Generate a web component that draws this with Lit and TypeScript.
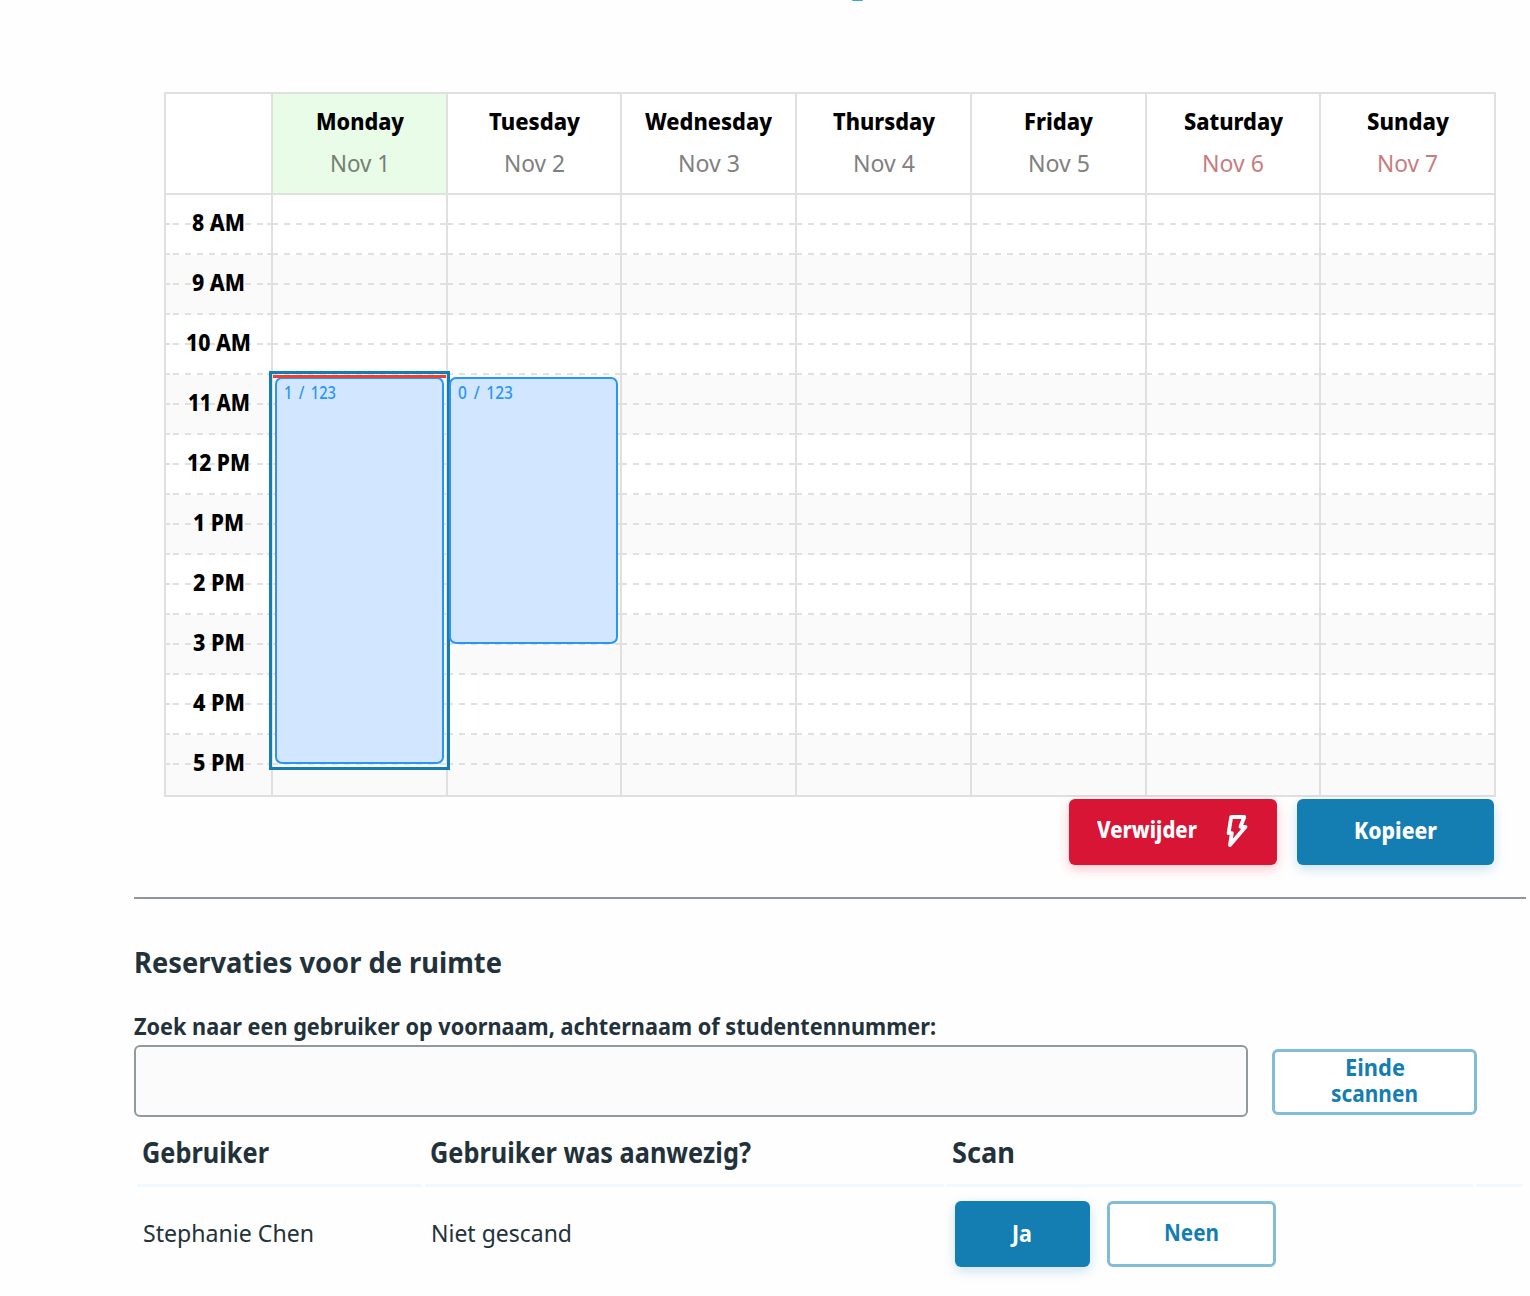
import { LitElement, html, css, nothing } from "lit";
import { customElement, property, query } from "lit/decorators.js";
import { styleMap } from "lit/directives/style-map.js";

/** A single line of text condensed or stretched to a given width. */
@customElement("fit-text")
export class FitText extends LitElement {
  @property({ type: Number }) w = 0;
  @property() text = "";
  @query(".ink") private ink!: HTMLElement;

  static styles = css`
    :host { display: inline-block; white-space: nowrap; vertical-align: top; }
    .box { display: block; }
    .ink { display: inline-block; transform-origin: 0 50%; }
  `;

  protected updated() {
    this.ink.style.transform = "none";
    const natural = this.ink.getBoundingClientRect().width;
    if (natural > 0) this.ink.style.transform = `scaleX(${this.w / natural})`;
  }

  render() {
    return html`<span class="box" style=${styleMap({ width: `${this.w}px` })}><span class="ink">${this.text}</span></span>`;
  }
}

interface Day {
  name: string;
  nameW: number;
  date: string;
  dateW: number;
  today?: boolean;
  weekend?: boolean;
}

const DAYS: Day[] = [
  { name: "Monday", nameW: 88, date: "Nov 1", dateW: 60, today: true },
  { name: "Tuesday", nameW: 91, date: "Nov 2", dateW: 61 },
  { name: "Wednesday", nameW: 127, date: "Nov 3", dateW: 62 },
  { name: "Thursday", nameW: 102, date: "Nov 4", dateW: 62 },
  { name: "Friday", nameW: 69, date: "Nov 5", dateW: 62 },
  { name: "Saturday", nameW: 99, date: "Nov 6", dateW: 62, weekend: true },
  { name: "Sunday", nameW: 82, date: "Nov 7", dateW: 61, weekend: true },
];

const HOURS: [string, number][] = [
  ["8 AM", 53], ["9 AM", 53], ["10 AM", 65], ["11 AM", 62], ["12 PM", 63],
  ["1 PM", 51], ["2 PM", 52], ["3 PM", 52], ["4 PM", 52], ["5 PM", 52],
];

@customElement("week-calendar")
export class WeekCalendar extends LitElement {
  static styles = css`
    :host { display: block; width: 1332px; }
    * { box-sizing: border-box; }
    .cal { border: 2px solid #e0e0e0; background: #fff; }
    .grid { display: grid; grid-template-columns: 107px 175px 174px 175px 175px 175px 174px 173px; }
    .head { height: 101px; border-bottom: 2px solid #e0e0e0; }
    .cell { border-right: 2px solid #e0e0e0; }
    .cell:last-child { border-right: 0; }
    .day { display: flex; flex-direction: column; align-items: center; padding-top: 7px; line-height: 40px; font-size: 23.5px; }
    .today { background: #e8fce8; }
    .name { font-weight: 800; color: #000; height: 42px; }
    .date { color: #808080; }
    .today .date { color: #748074; }
    .weekend .date { color: #c77d80; }
    .body { height: 600px; }
    .col { position: relative; }
    .slot { height: 60px; }
    .slot:nth-child(even) { background: #fafafa; }
    .half { height: 30px; margin: 0 -1px; background: repeating-linear-gradient(90deg, #e0e0e0 0 6px, transparent 6px 12px) 0 100% / 100% 2px no-repeat; }
    .hours .half {
      background:
        linear-gradient(#e0e0e0, #e0e0e0) 0 100% / 5px 2px no-repeat,
        linear-gradient(#e0e0e0, #e0e0e0) 100% 100% / 5px 2px no-repeat,
        linear-gradient(90deg, #e0e0e0 6px, transparent 6px) 8px 100% / 12px 2px repeat-x;
    }
    .slot:nth-child(10) .half:nth-child(2) { background: none; }
    .hours .slot { position: relative; }
    .hour { position: absolute; inset: 7px 0 auto 0; line-height: 40px; text-align: center; font-size: 23.5px; font-weight: 800; color: #000; }
    .event { position: absolute; z-index: 2; top: 182px; left: 2px; width: 169px; height: 387px; border: 2px solid #2b94f7; border-radius: 7px; background: #d2e7ff; padding: 2px 0 0 7px; font-size: 17.2px; line-height: 24px; font-weight: 500; color: #2b94f7; word-spacing: 3px; }
    .event.short { left: 1px; height: 267px; }
    .selected { position: absolute; z-index: 1; top: 176px; left: -4px; width: 181px; height: 399px; border: 3px solid #147eb3; }
    .now { position: absolute; z-index: 3; top: 180px; left: 0; width: 173px; height: 3px; background: #ea4335; }
  `;

  private slots(hours = false) {
    return HOURS.map(([label, w]) => html`
      <div class="slot">
        <div class="half"></div><div class="half"></div>
        ${hours ? html`<div class="hour"><fit-text .w=${w} .text=${label}></fit-text></div>` : nothing}
      </div>`);
  }

  private events(i: number) {
    if (i === 0) {
      return html`<div class="event"><fit-text .w=${52} text="1 / 123"></fit-text></div>
        <div class="selected"></div><div class="now"></div>`;
    }
    if (i === 1) return html`<div class="event short"><fit-text .w=${55} text="0 / 123"></fit-text></div>`;
    return nothing;
  }

  render() {
    return html`<div class="cal">
      <div class="grid head">
        <div class="cell"></div>
        ${DAYS.map((d) => html`<div class="cell day ${d.today ? "today" : ""} ${d.weekend ? "weekend" : ""}">
          <div class="name"><fit-text .w=${d.nameW} .text=${d.name}></fit-text></div>
          <div class="date"><fit-text .w=${d.dateW} .text=${d.date}></fit-text></div>
        </div>`)}
      </div>
      <div class="grid body">
        <div class="cell col hours">${this.slots(true)}</div>
        ${DAYS.map((_, i) => html`<div class="cell col">${this.slots()}${this.events(i)}</div>`)}
      </div>
    </div>`;
  }
}

@customElement("app-root")
export class AppRoot extends LitElement {
  static styles = css`
    :host { display: block; width: 1530px; height: 1296px; overflow: hidden; background: #fefefe; color: #23323a; font-family: "Noto Sans", "Open Sans", sans-serif; }
    * { box-sizing: border-box; }
    .top { height: 92px; padding-left: 852px; }
    .tail { width: 11px; height: 1px; background: #35a6de; border-radius: 0 0 5px 5px; }
    .calendar { margin-left: 164px; }
    .actions { display: flex; gap: 20px; margin: 2px 0 0 1069px; height: 66px; }
    .btn { display: flex; align-items: center; justify-content: center; height: 66px; border: 0; border-radius: 6px; padding: 0; font: 700 22.3px/26px "Noto Sans", "Open Sans", sans-serif; color: #fff; background: #147eb3; box-shadow: 0 4px 12px rgba(20, 126, 179, 0.22); }
    .danger { width: 208px; background: #d91536; box-shadow: 0 4px 12px rgba(255, 30, 60, 0.25); justify-content: flex-start; padding: 0 0 4px 28px; }
    .bolt { width: 24px; height: 34px; margin: 2px 0 0 28px; }
    .copy, .danger { font-weight: 800; }
    .copy { width: 197px; padding: 0 1px 2px 0; }
    .ghost { background: #fff; color: #147eb3; border: 3px solid #82bdd8; box-shadow: none; flex-direction: column; }
    .rule { width: 1392px; height: 2px; margin: 32px 0 0 134px; background: #90979a; }
    .main { padding-left: 134px; }
    .title { margin: 43px 0 0; font-size: 29.2px; line-height: 40px; height: 40px; font-weight: 700; }
    .label { display: block; margin: 28px 0 0; font-size: 23.4px; line-height: 32px; height: 32px; font-weight: 700; }
    .search { display: flex; gap: 24px; margin-top: 3px; height: 72px; }
    .input { width: 1114px; height: 72px; border: 2px solid #90999b; border-radius: 6px; background: #fbfbfb; }
    .scan { width: 205px; margin-top: 4px; padding-bottom: 2px; }
    .table { display: grid; grid-template-columns: 285px 519px 526px 47px; column-gap: 3px; margin-left: 3px; }
    .th { height: 70px; padding: 15px 0 12px 5px; border-bottom: 3px solid #f0f9ff; font-size: 28px; line-height: 40px; font-weight: 700; }
    .td { height: 94px; display: flex; align-items: center; padding-left: 6px; font-size: 23.4px; line-height: 40px; }
    .td fit-text { margin-top: -2px; }
    .choices { gap: 17px; padding-left: 8px; }
    .yes { width: 135px; padding-right: 1px; }
    .yes fit-text, .no fit-text { margin-top: 0; }
    .no { width: 169px; padding-bottom: 2px; }
  `;

  render() {
    return html`
      <div class="top"><div class="tail"></div></div>
      <week-calendar class="calendar"></week-calendar>
      <div class="actions">
        <button class="btn danger">
          <fit-text .w=${100} text="Verwijder"></fit-text>
          <svg class="bolt" viewBox="0 0 24 34" fill="none" stroke="#fff" stroke-width="3.8" stroke-linejoin="round">
            <path d="M6.2 3 H19.3 L15.5 12.8 H20.5 L5 31 L6.8 19.2 H3.6 Z" />
          </svg>
        </button>
        <button class="btn copy"><fit-text .w=${83} text="Kopieer"></fit-text></button>
      </div>
      <div class="rule"></div>
      <div class="main">
        <h2 class="title"><fit-text .w=${368} text="Reservaties voor de ruimte"></fit-text></h2>
        <label class="label"><fit-text .w=${802} text="Zoek naar een gebruiker op voornaam, achternaam of studentennummer:"></fit-text></label>
        <div class="search">
          <input class="input" type="text" />
          <button class="btn ghost scan">
            <fit-text .w=${60} text="Einde"></fit-text>
            <fit-text .w=${87} text="scannen"></fit-text>
          </button>
        </div>
        <div class="table">
          <div class="th"><fit-text .w=${127} text="Gebruiker"></fit-text></div>
          <div class="th"><fit-text .w=${321} text="Gebruiker was aanwezig?"></fit-text></div>
          <div class="th"><fit-text .w=${63} text="Scan"></fit-text></div>
          <div class="th"></div>
          <div class="td"><fit-text .w=${171} text="Stephanie Chen"></fit-text></div>
          <div class="td"><fit-text .w=${141} text="Niet gescand"></fit-text></div>
          <div class="td choices">
            <button class="btn yes"><fit-text .w=${20} text="Ja"></fit-text></button>
            <button class="btn ghost no"><fit-text .w=${55} text="Neen"></fit-text></button>
          </div>
        </div>
      </div>`;
  }
}
